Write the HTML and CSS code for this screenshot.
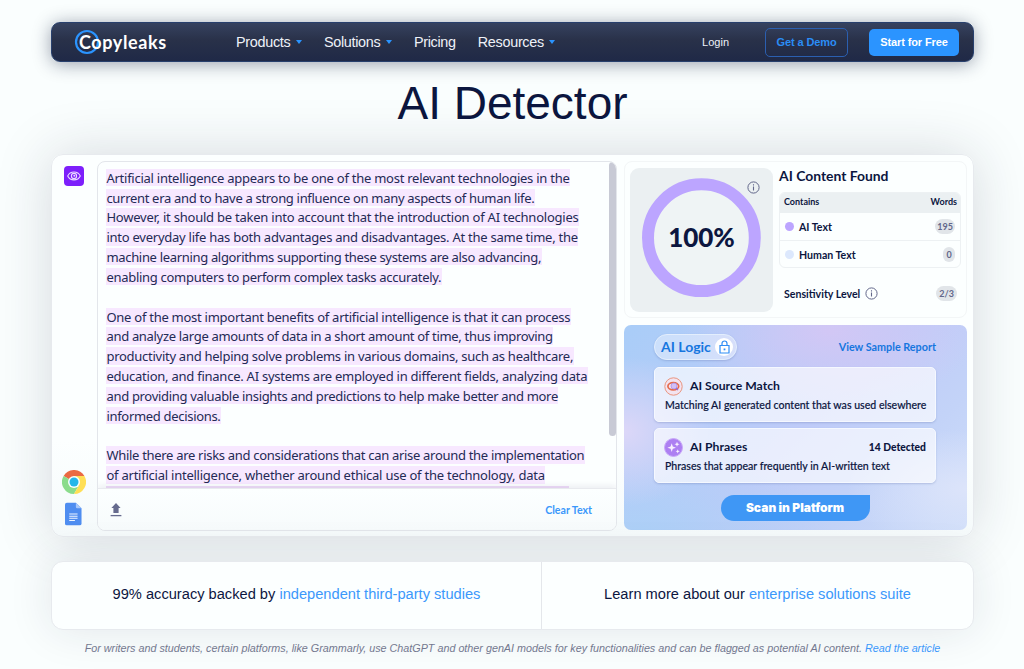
FILE: index.html
```html
<!DOCTYPE html>
<html lang="en">
<head>
<meta charset="utf-8">
<title>AI Detector</title>
<link rel="stylesheet" href="styles.css">
</head>
<body>
<header class="nav">
  <a class="logo"><svg width="26" height="26" viewBox="0 0 26 26"><circle cx="13" cy="13" r="11" fill="none" stroke="#2b94ff" stroke-width="2.2"/></svg><span>Copyleaks</span></a>
  <nav class="menu">
    <a>Products<i class="caret"></i></a>
    <a>Solutions<i class="caret"></i></a>
    <a>Pricing</a>
    <a>Resources<i class="caret"></i></a>
  </nav>
  <a class="login">Login</a>
  <a class="btn outline">Get a Demo</a>
  <a class="btn solid">Start for Free</a>
</header>
<h1>AI Detector</h1>
<main class="panel">
  <aside class="rail">
    <svg class="eye" width="20" height="20" viewBox="0 0 20 20"><rect width="20" height="20" rx="4" fill="#7d1ffb"/><g fill="none" stroke="#eadcff" stroke-width="1.1"><path d="M3.7 10C6.2 4.6 13.8 4.6 16.3 10C13.8 15.2 6.2 15.2 3.7 10Z"/><circle cx="10" cy="10" r="2.6"/></g><circle cx="10.3" cy="9.8" r="1" fill="#eadcff"/></svg>
    <svg class="chrome" width="24" height="24" viewBox="0 0 24 24"><path d="M12 12L1.6 6A12 12 0 0 1 22.4 6Z" fill="#ea6a43"/><path d="M12 12L1.6 6A12 12 0 0 0 12 24L17.2 15Z" fill="#8bdc8c"/><path d="M12 6H22.4A12 12 0 0 1 12 24L17.2 15Z" fill="#ffdf55"/><circle cx="12" cy="12" r="6" fill="#fbfefe"/><circle cx="12" cy="12" r="4.5" fill="#25b6ea"/></svg>
    <svg class="doc" width="17" height="24" viewBox="0 0 18 24"><path d="M2 0H11.5L17.5 6V22a2 2 0 0 1-2 2H2a2 2 0 0 1-2-2V2A2 2 0 0 1 2 0Z" fill="#4f8df0"/><path d="M11.5 0L17.5 6H13a1.5 1.5 0 0 1-1.5-1.5Z" fill="#a9c8fa"/><path d="M4.5 12H13.3M4.5 14.3H13.3M4.5 16.6H13.3M4.5 18.9H10.5" stroke="#eef5ff" stroke-width="1.1"/></svg>
  </aside>
  <section class="editor">
    <div class="text">
      <p><mark class="l1">Artificial intelligence appears to be one of the most relevant technologies in the</mark><mark class="l2">current era and to have a strong influence on many aspects of human life.</mark><mark class="l3">However, it should be taken into account that the introduction of AI technologies</mark><mark class="l4">into everyday life has both advantages and disadvantages. At the same time, the</mark><mark class="l5">machine learning algorithms supporting these systems are also advancing,</mark><mark class="l6">enabling computers to perform complex tasks accurately.</mark></p>
      <p><mark class="l7">One of the most important benefits of artificial intelligence is that it can process</mark><mark class="l8">and analyze large amounts of data in a short amount of time, thus improving</mark><mark class="l9">productivity and helping solve problems in various domains, such as healthcare,</mark><mark class="l10">education, and finance. AI systems are employed in different fields, analyzing data</mark><mark class="l11">and providing valuable insights and predictions to help make better and more</mark><mark class="l12">informed decisions.</mark></p>
      <p><mark class="l13">While there are risks and considerations that can arise around the implementation</mark><mark class="l14">of artificial intelligence, whether around ethical use of the technology, data</mark><mark class="l15"></mark></p>
      <div class="scroll"></div>
    </div>
    <footer class="tools">
      <svg width="12" height="14" viewBox="0 0 12 14"><path d="M6 0L10.6 5H8.6V10H3.4V5H1.4Z" fill="#666b8e"/><path d="M.6 12.6H11.4" stroke="#666b8e" stroke-width="1.3"/></svg>
      <a>Clear Text</a>
    </footer>
  </section>
  <div class="side">
    <section class="result">
      <div class="score">
        <svg width="143" height="144" viewBox="0 0 143 144"><circle cx="71.4" cy="69.7" r="53.4" fill="#eff4f5" stroke="#bca5ff" stroke-width="12"/></svg>
        <b>100%</b>
        <svg class="info" width="13" height="13" viewBox="0 0 13 13"><circle cx="6.5" cy="6.5" r="5.6" fill="none" stroke="#62678a" stroke-width="1"/><path d="M6.5 5.6V9.6M6.5 3.3V4.5" stroke="#62678a" stroke-width="1.1"/></svg>
      </div>
      <div class="found">
        <h2><span>AI Content Found</span></h2>
        <div class="table">
          <div class="th"><span>Contains</span><span>Words</span></div>
          <div class="tr"><i class="dot"></i><span>AI Text</span><em>195</em></div>
          <div class="tr last"><i class="dot pale"></i><span>Human Text</span><em>0</em></div>
        </div>
        <div class="level"><span>Sensitivity Level</span><svg width="13" height="13" viewBox="0 0 13 13"><circle cx="6.5" cy="6.5" r="5.6" fill="none" stroke="#62678a" stroke-width="1"/><path d="M6.5 5.6V9.6M6.5 3.3V4.5" stroke="#62678a" stroke-width="1.1"/></svg><em>2/3</em></div>
      </div>
    </section>
    <section class="logic">
      <div class="top">
        <div class="pill"><span>AI Logic</span><div class="lock"><svg width="11" height="14" viewBox="0 0 11 14"><path d="M1 5.5H10V13H1ZM3 5.5V3.5a2.5 2.5 0 0 1 5 0V5.5" fill="none" stroke="#2f8df5" stroke-width="1.2"/><path d="M4.6 8.5H6.4V10.3H4.6Z" fill="#2f8df5"/></svg></div></div>
        <a>View Sample Report</a>
      </div>
      <div class="card">
        <div class="head"><svg width="19" height="19" viewBox="0 0 19 19"><circle cx="9.5" cy="9.5" r="8.7" fill="#f3e3ef" stroke="#e9957f" stroke-width="1"/><ellipse cx="9.3" cy="9.3" rx="5.4" ry="3.6" fill="none" stroke="#e56a4c" stroke-width="1.7"/><circle cx="10" cy="9" r="3" fill="#d3bff6" stroke="#ab92e8" stroke-width=".8"/><path d="M12 11L14 13.2" stroke="#8d6ee6" stroke-width="1.2"/></svg><h3>AI Source Match</h3></div>
        <p>Matching AI generated content that was used elsewhere</p>
      </div>
      <div class="card">
        <div class="head"><svg width="19" height="19" viewBox="0 0 19 19"><circle cx="9.5" cy="9.5" r="9" fill="#ad7ff2" stroke="#c8a9f8" stroke-width="1"/><path d="M7.7 5.3L8.8 8.6L12 9.7L8.8 10.8L7.7 14L6.6 10.8L3.4 9.7L6.6 8.6ZM13 3.7L13.7 5.5L15.5 6.2L13.7 6.9L13 8.7L12.3 6.9L10.5 6.2L12.3 5.5ZM13.7 11.2L14.3 12.7L15.8 13.3L14.3 13.9L13.7 15.4L13.1 13.9L11.6 13.3L13.1 12.7Z" fill="#f8f0ff"/></svg><h3>AI Phrases</h3><b>14 Detected</b></div>
        <p>Phrases that appear frequently in AI-written text</p>
      </div>
      <a class="scan">Scan in Platform</a>
    </section>
  </div>
</main>
<section class="facts">
  <div><span>99% accuracy backed by <a>independent third-party studies</a></span></div>
  <div><span>Learn more about our <a>enterprise solutions suite</a></span></div>
</section>
<p class="note">For writers and students, certain platforms, like Grammarly, use ChatGPT and other genAI models for key functionalities and can be flagged as potential AI content. <a>Read the article</a></p>
</body>
</html>
```
FILE: styles.css
```css
* { box-sizing: border-box; }
body { margin: 0; width: 1024px; height: 669px; overflow: hidden; padding: 22px 50px 0 51px; background: #fafefe; font-family: "Liberation Sans", Arial, sans-serif; color: #0c163f; }
h1, h2, h3, p { margin: 0; font-weight: 400; }
svg { display: block; flex: none; }
span, a, mark, h3 { white-space: nowrap; }
.nav { position: relative; width: 923px; height: 40px; border-radius: 9px; background: linear-gradient(#36425f, #293149 45%, #1f2947); border: 1px solid #28406d; box-shadow: 0 2px 18px rgba(20, 28, 60, .42); display: flex; align-items: center; color: #eef1f8; padding: 0 14px 0 22px; }
.logo { position: relative; width: 94px; height: 26px; font: 700 18px/26px Lato, sans-serif; color: #fff; }
.logo span { position: absolute; left: 5px; top: 0; letter-spacing: .6px; }
.menu { display: flex; margin-left: 68px; font-size: 14.4px; gap: 22px; }
.menu a { display: flex; align-items: center; gap: 5.5px; letter-spacing: -.3px; }
.caret { border: 3.5px solid transparent; border-top: 4px solid #2b94ff; border-bottom: 0; }
.login { margin-left: auto; font-size: 11px; margin-right: 36px; }
.btn { display: flex; align-items: center; justify-content: center; font-size: 11px; font-weight: 700; border-radius: 5px; }
.outline { width: 83px; height: 29px; border: 1px solid #2b5fb0; color: #2b8df5; margin-right: 21px; letter-spacing: -.1px; }
.solid { width: 90px; height: 27px; background: #2b94ff; color: #fff; letter-spacing: -.1px; }
h1 { height: 92px; font-size: 46px; line-height: 82px; text-align: center; }
.panel { position: relative; width: 923px; height: 383px; border: 1px solid #e7eaee; border-radius: 12px; background: linear-gradient(#fcffff 75%, #f5fafb); box-shadow: 0 0 55px rgba(30, 35, 60, .17); display: flex; padding: 6px; }
.rail { width: 39px; display: flex; flex-direction: column; padding: 5px 0 4px 6px; }
.eye { margin-left: -.4px; }
.chrome { margin: auto 0 8px -2px; }
.doc { margin-left: 1px; }
.editor { width: 521px; height: 370px; border: 1px solid #e3e6eb; border-radius: 8px; overflow: hidden; background: #fcffff; display: flex; flex-direction: column; }
.text { position: relative; height: 326px; overflow: hidden; padding: 5.6px 8px 0; font: 13px/19.85px "Noto Sans", sans-serif; color: #242a55; }
.text p { margin-bottom: 19.85px; display: flex; flex-direction: column; align-items: flex-start; }
mark { height: 17.4px; line-height: 18.2px; margin: 1.2px 0 1.25px; background: #f7e8ff; color: inherit; padding: 0 .5px; letter-spacing: -.315px; }
.l1 { letter-spacing: -.255px; }
.l3 { letter-spacing: -.23px; }
.l4 { letter-spacing: -.25px; }
.l5 { letter-spacing: -.325px; }
.l6 { letter-spacing: -.29px; }
.l7 { letter-spacing: -.265px; }
.l9 { letter-spacing: -.27px; }
.l10 { letter-spacing: -.245px; }
.l13 { letter-spacing: -.305px; }
.l14 { letter-spacing: -.235px; }
.l15 { width: 463px; background: #eedcf8; }
.scroll { position: absolute; right: 0; top: 0; width: 7px; height: 274px; border-radius: 4px; background: #c8cad5; }
.tools { position: relative; height: 42px; border-top: 1px solid #e8eaee; background: linear-gradient(#fcffff, #f7fbfc); box-shadow: 0 -2px 6px rgba(40, 30, 80, .08); display: flex; align-items: center; justify-content: space-between; padding: 0 24px 0 12px; }
.tools a { font: 700 10.6px Lato, sans-serif; color: #3b98fb; }
.side { width: 343px; margin-left: 7px; display: flex; flex-direction: column; gap: 7px; }
.result { height: 157px; border: 1px solid #f3f6f7; border-radius: 8px; display: flex; padding: 6px 5px 0; }
.score { position: relative; width: 143px; height: 144px; border-radius: 9px; background: #ebf0f2; overflow: hidden; }
.score b { position: absolute; inset: 0 0 7px; display: flex; align-items: center; justify-content: center; font: 900 26px Lato, sans-serif; }
.info { position: absolute; right: 13px; top: 13px; }
.found { width: 182px; margin-left: 6px; font-family: Lato, sans-serif; font-weight: 700; }
h2 { height: 24px; font: 700 13.9px/16px Lato, sans-serif; }
.table { height: 76px; border: 1px solid #edf1f3; border-radius: 6px; overflow: hidden; }
.th { height: 20px; background: #ebf0f2; display: flex; justify-content: space-between; padding: 0 3px 0 4px; font-size: 9px; line-height: 18px; }
.tr { height: 28px; display: flex; align-items: center; font-size: 10.6px; padding-left: 5px; border-bottom: 1px solid #edf1f3; }
.last { height: 27px; border: 0; }
.dot { width: 9px; height: 9px; border-radius: 50%; background: #bca5ff; margin-right: 5px; }
.pale { background: #dce8fd; }
em { font: 700 9px/15px Lato, sans-serif; background: #e1e5e9; color: #62678a; border-radius: 8px; padding: 0 2px; min-width: 12px; text-align: center; margin-left: auto; margin-right: 5px; }
.level { display: flex; align-items: center; height: 51px; padding-left: 5px; font-size: 10.6px; }
.level svg { margin-left: 5px; }
.level em { margin-right: 4px; padding: 0 3px; }
.logic { height: 206px; border-radius: 7px; padding: 9px 31px 0 30px; display: flex; flex-direction: column; background: radial-gradient(ellipse 150px 75px at 60% 3%, #d2c7f5, transparent), radial-gradient(ellipse 90px 75px at 0 52%, #dcd7f8, transparent), radial-gradient(ellipse 120px 60px at 100% 80%, #dce4fa, transparent), radial-gradient(ellipse 190px 80px at 5% 100%, #add0f7, transparent), linear-gradient(135deg, #a9cdf8, #bfcbf8 52%, #c3d3f8 75%, #cfdefa); }
.top { height: 27px; display: flex; align-items: center; justify-content: space-between; font: 700 10.8px Lato, sans-serif; color: #1676df; margin-bottom: 6px; padding-bottom: 1px; }
.top > a { padding-bottom: 2px; }
.pill { width: 83px; height: 26px; border-radius: 13px; border: 1px solid #e3eefd; background: rgba(255, 255, 255, .38); box-shadow: 0 1px 2px rgba(70, 90, 150, .25); display: flex; align-items: center; justify-content: space-between; padding: 0 3px 0 6px; font-size: 14px; }
.pill span { padding-bottom: 2px; }
.lock { width: 18px; height: 18px; border-radius: 50%; background: #fff; display: flex; align-items: center; justify-content: center; }
.card { height: 55px; border: 1px solid #f5f8ff; border-radius: 5px; background: rgba(255, 255, 255, .66); box-shadow: 0 1px 2px rgba(70, 90, 150, .25); margin-bottom: 6px; padding: 8px 9px 0 10px; font-family: Lato, sans-serif; font-weight: 700; }
.card + .card { margin-bottom: 12px; }
.head { height: 20px; display: flex; align-items: center; margin-left: -1px; }
.head h3 { font: 700 12.2px Lato, sans-serif; margin-left: 7px; padding-bottom: 1px; }
.head b { font-size: 10.3px; margin-left: auto; }
.card p { font: 500 10.58px/19px Lato, sans-serif; white-space: nowrap; -webkit-text-stroke: .15px; }
.scan { align-self: center; width: 149px; height: 26px; border-radius: 13px 0 13px 13px; background: #3f97f5; color: #fff; font: 900 12px/26px Inter, sans-serif; text-align: center; }
.facts { position: relative; width: 923px; height: 69px; margin-top: 24px; border: 1px solid #e7eaee; border-radius: 12px; background: #fcffff; box-shadow: 0 0 45px rgba(30, 35, 60, .11); display: grid; grid-template-columns: 489px 1fr; font-size: 14.65px; }
.facts div { display: flex; align-items: center; justify-content: center; padding-bottom: 3px; }
.facts div + div { border-left: 1px solid #e4e7eb; }
.facts a, .note a { color: #3b98fb; }
.note { position: relative; font-size: 10.77px; font-style: italic; line-height: 14px; text-align: center; color: #73788f; margin-top: 11px; white-space: nowrap; }
```
